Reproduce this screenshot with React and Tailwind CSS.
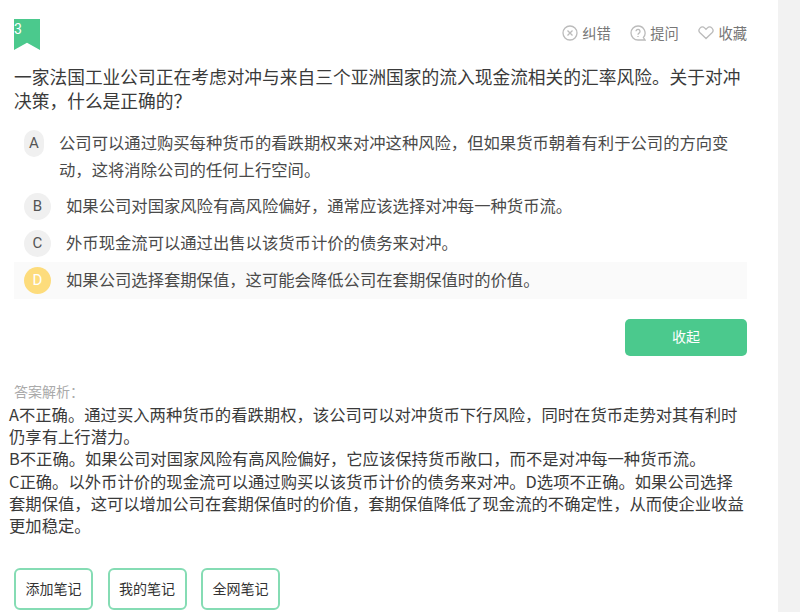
import React from "react";

const font = "font-['Noto_Sans_CJK_SC','Noto_Sans',sans-serif]";

function Circle({ letter, active }) {
  return (
    <span
      className={`flex h-[27px] w-[27px] shrink-0 items-center justify-center rounded-full text-[15px] font-['Roboto',sans-serif] ${
        active ? "bg-[#fddc7c] text-white" : "bg-[#f0f0f0] text-[#555]"
      }`}
    >
      {letter}
    </span>
  );
}

function Action({ icon, label }) {
  return (
    <div className="flex items-center gap-[4px] text-[14.3px] text-[#777]">
      {icon}
      <span>{label}</span>
    </div>
  );
}

function Note({ label }) {
  return (
    <button className="h-[42px] w-[79px] rounded-[6px] border-2 border-[#85dcb4] bg-white pb-[2px] text-[14px] text-[#333]">
      {label}
    </button>
  );
}

export default function App() {
  return (
    <div className={`flex h-[612px] w-[800px] overflow-hidden bg-[#f2f2f2] ${font}`}>
      <div className="h-full w-[778px] bg-white">
        <div className="flex h-[64px] items-start justify-between pl-[14px] pr-[31px] pt-[19px]">
          <div className="relative h-[31px] w-[26px] bg-[#4bc98d] [clip-path:polygon(0_0,100%_0,100%_100%,50%_77%,0_100%)]">
            <span className="absolute left-0 top-0 text-[14px] leading-[20px] text-white font-['Roboto',sans-serif]">3</span>
          </div>
          <div className="mt-[3px] flex items-center gap-[19.5px]">
            <Action
              label="纠错"
              icon={
                <svg width="16" height="16" viewBox="0 0 16 16" fill="none" stroke="#bbb" strokeWidth="1.3">
                  <circle cx="8" cy="8" r="7" />
                  <path d="M5.5 5.5l5 5M10.5 5.5l-5 5" />
                </svg>
              }
            />
            <Action
              label="提问"
              icon={
                <svg width="16" height="16" viewBox="0 0 16 16" fill="none" stroke="#bbb" strokeWidth="1.3">
                  <path d="M8 1a7 7 0 1 0 0 14h7l-1.6-2.5A7 7 0 0 0 8 1z" />
                  <path d="M6 6.3a2 2 0 1 1 3 1.8c-.7.4-1 .8-1 1.6M8 11v1" />
                </svg>
              }
            />
            <Action
              label="收藏"
              icon={
                <svg width="16" height="16" viewBox="0 0 16 16" fill="none" stroke="#bbb" strokeWidth="1.3">
                  <path d="M8 13.5L2 7.8a3.4 3.4 0 0 1 0-4.7 3.4 3.4 0 0 1 4.8 0L8 4.3l1.2-1.2a3.4 3.4 0 0 1 4.8 0 3.4 3.4 0 0 1 0 4.7z" />
                </svg>
              }
            />
          </div>
        </div>

        <h1 className="mr-[31px] pb-[1px] pl-[14px] text-[17.73px] font-normal leading-[24px] text-[#3a3a3a]">
          一家法国工业公司正在考虑对冲与来自三个亚洲国家的流入现金流相关的汇率风险。关于对冲决策，什么是正确的？
        </h1>

        <div className="mr-[31px] mt-[17px] pl-[14px] text-[16.33px] text-[#4a4a4a]">
          <div className="flex items-start gap-[15px] pb-[5px] pl-[10px] pr-[10px]">
            <span className="flex h-[27px] w-[20px] shrink-0 items-center justify-center rounded-full bg-[#f0f0f0] text-[15px] text-[#555] font-['Roboto',sans-serif]">A</span>
            <p className="mt-[-1px] leading-[27px]">
              公司可以通过购买每种货币的看跌期权来对冲这种风险，但如果货币朝着有利于公司的方向变动，这将消除公司的任何上行空间。
            </p>
          </div>
          <div className="flex h-[37px] items-center gap-[15px] pl-[10px]">
            <Circle letter="B" />
            <span className="pb-[2px]">如果公司对国家风险有高风险偏好，通常应该选择对冲每一种货币流。</span>
          </div>
          <div className="flex h-[37px] items-center gap-[15px] pl-[10px]">
            <Circle letter="C" />
            <span className="pb-[2px]">外币现金流可以通过出售以该货币计价的债务来对冲。</span>
          </div>
          <div className="flex h-[37px] items-center gap-[15px] bg-[#fafafa] pl-[10px]">
            <Circle letter="D" active />
            <span className="pb-[2px]">如果公司选择套期保值，这可能会降低公司在套期保值时的价值。</span>
          </div>
        </div>

        <div className="mr-[31px] mt-[20px] flex justify-end">
          <button className="h-[37px] w-[122px] rounded-[5px] bg-[#4bc98d] pb-[2px] text-[14px] text-white">收起</button>
        </div>

        <div className="mt-[25px] pl-[14px] text-[14px] leading-[20px] text-[#aaa]">答案解析：</div>
        <div className="mr-[31px] mt-[2px] pl-[9px] text-[16.33px] leading-[22.2px] text-[#3a3a3a]">
          <p>A不正确。通过买入两种货币的看跌期权，该公司可以对冲货币下行风险，同时在货币走势对其有利时仍享有上行潜力。</p>
          <p>B不正确。如果公司对国家风险有高风险偏好，它应该保持货币敞口，而不是对冲每一种货币流。</p>
          <p>C正确。以外币计价的现金流可以通过购买以该货币计价的债务来对冲。D选项不正确。如果公司选择套期保值，这可以增加公司在套期保值时的价值，套期保值降低了现金流的不确定性，从而使企业收益更加稳定。</p>
        </div>

        <div className="mt-[32px] flex gap-[14.5px] pl-[14px]">
          <Note label="添加笔记" />
          <Note label="我的笔记" />
          <Note label="全网笔记" />
        </div>
      </div>
    </div>
  );
}
